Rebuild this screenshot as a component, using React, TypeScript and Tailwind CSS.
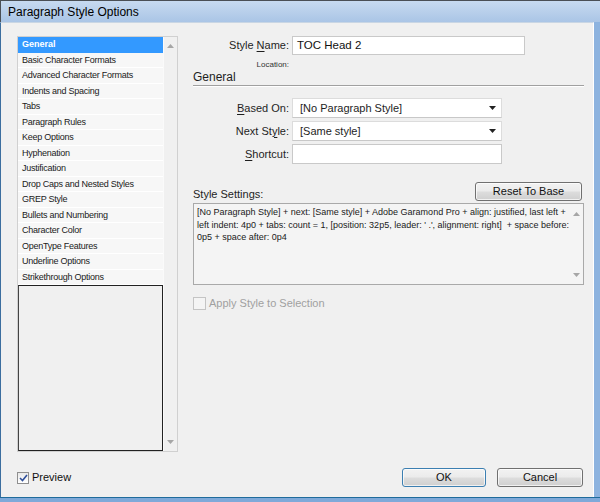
import React from 'react';

const listItems = [
  'General',
  'Basic Character Formats',
  'Advanced Character Formats',
  'Indents and Spacing',
  'Tabs',
  'Paragraph Rules',
  'Keep Options',
  'Hyphenation',
  'Justification',
  'Drop Caps and Nested Styles',
  'GREP Style',
  'Bullets and Numbering',
  'Character Color',
  'OpenType Features',
  'Underline Options',
  'Strikethrough Options',
];

const settingsLines = [
  '[No Paragraph Style] + next: [Same style] + Adobe Garamond Pro + align: justified, last left +',
  "left indent: 4p0 + tabs: count = 1, [position: 32p5, leader: ' .', alignment: right]  + space before:",
  '0p5 + space after: 0p4',
];

const ArrowUp = () => (
  <svg width="7" height="4" viewBox="0 0 7 4">
    <path d="M0 4 L3.5 0 L7 4 Z" fill="#a6a6a6" />
  </svg>
);

const ArrowDown = ({ color = '#a6a6a6' }: { color?: string }) => (
  <svg width="7" height="4" viewBox="0 0 7 4">
    <path d="M0 0 L7 0 L3.5 4 Z" fill={color} />
  </svg>
);

const Label = ({ pre, u, post }: { pre: string; u: string; post: string }) => (
  <div className="w-[96px] text-right text-[11px] text-[#1e1e1e] whitespace-nowrap">
    {pre}
    <span className="underline underline-offset-2">{u}</span>
    {post}
  </div>
);

const Select = ({ value }: { value: string }) => (
  <div className="w-[210px] h-[20px] bg-white border border-[#dcdcdc] border-b-[#c8c8c8] flex items-center justify-between pl-[7px] pr-[5px]">
    <span className="text-[11px] text-[#1e1e1e]">{value}</span>
    <ArrowDown color="#222" />
  </div>
);

const Button = ({ label, focused, w }: { label: string; focused?: boolean; w: string }) => (
  <div
    className={`${w} h-[19px] rounded-[3px] border flex items-center justify-center text-[11px] text-[#111] bg-[linear-gradient(to_bottom,#f2f2f2_0%,#ebebeb_48%,#dddddd_52%,#cfcfcf_100%)] shadow-[inset_0_0_0_1px_rgba(255,255,255,0.7)] ${
      focused ? 'border-[#3c7fb1]' : 'border-[#707070]'
    }`}
  >
    {label}
  </div>
);

export default function App() {
  return (
    <div className="w-[600px] h-[502px] flex flex-col overflow-hidden bg-[#7fa9d9] font-['Liberation_Sans',Arial,sans-serif]">
      {/* title bar */}
      <div className="h-[22px] shrink-0 flex items-center pl-[7px] border-t border-l border-[#4a4f55] bg-[linear-gradient(to_bottom,#c7daf0,#aac5e6)]">
        <span className="text-[12px] text-black">Paragraph Style Options</span>
      </div>

      <div className="flex-1 flex min-h-0">
        <div className="w-[594px] shrink-0 flex flex-col bg-[#f0f0f0] border-l border-[#3c6e9f] border-r border-r-white border-t border-t-[#c9d6e4]">
          {/* main area */}
          <div className="flex pt-[13px] pl-[16px] h-[431px]">
            {/* left list */}
            <div className="w-[161px] h-[416px] border border-[#d0d0d0] flex bg-[#f0f0f0]">
              <div className="w-[145px] flex flex-col">
                {listItems.map((item, i) => (
                  <div
                    key={item}
                    className={`h-[15.5px] leading-[15px] pl-[4px] text-[9px] whitespace-nowrap border-b ${
                      i === 0
                        ? 'bg-[#3399ff] text-white font-bold border-[#3399ff]'
                        : 'bg-[#f7f7f7] text-[#1a1a1a] border-white tracking-[-0.25px]'
                    }`}
                  >
                    {item}
                  </div>
                ))}
                <div className="flex-1 border border-[#222] border-l-[#444] bg-[#f0f0f0]" />
              </div>
              <div className="flex-1 flex flex-col items-center justify-between pt-[7px] pb-[7px] border-l border-[#fafafa]">
                <ArrowUp />
                <ArrowDown />
              </div>
            </div>

            {/* right panel */}
            <div className="ml-[15px] w-[391px] flex flex-col">
              <div className="flex items-center">
                <Label pre="Style " u="N" post="ame:" />
                <div className="ml-[3px] w-[233px] h-[19px] bg-white border border-[#c9c9c9] flex items-center pl-[4px] text-[11.5px] text-[#111]">
                  TOC Head 2
                </div>
              </div>
              <div className="w-[96px] text-right text-[8px] text-[#333] mt-[5px] leading-[10px]">Location:</div>
              <div className="mt-0 text-[12px] text-[#1e1e1e] leading-[14px]">General</div>
              <div className="mt-[1px] h-[2px] border-t border-[#a0a0a0] border-b border-b-white" />

              <div className="mt-[11px] flex items-center">
                <Label pre="" u="B" post="ased On:" />
                <div className="ml-[3px]">
                  <Select value="[No Paragraph Style]" />
                </div>
              </div>
              <div className="mt-[3px] flex items-center">
                <Label pre="Next St" u="y" post="le:" />
                <div className="ml-[3px]">
                  <Select value="[Same style]" />
                </div>
              </div>
              <div className="mt-[3px] flex items-center">
                <Label pre="" u="S" post="hortcut:" />
                <div className="ml-[3px] w-[210px] h-[20px] bg-white border border-[#c9c9c9]" />
              </div>

              <div className="mt-[18px] flex items-center justify-between pr-[2px]">
                <span className="text-[11px] text-[#1e1e1e] leading-[14px] pt-[5px]">Style Settings:</span>
                <Button label="Reset To Base" w="w-[107px]" />
              </div>

              <div className="mt-[2px] w-[391px] h-[82px] border border-[#a9a9a9] bg-[#f4f4f4] flex">
                <div className="flex-1 pl-[3px] pt-[2px] text-[9px] text-[#1a1a1a] leading-[12.5px]">
                  {settingsLines.map((l) => (
                    <div key={l} className="whitespace-pre">{l}</div>
                  ))}
                </div>
                <div className="w-[14px] flex flex-col items-center justify-between pt-[8px] pb-[7px]">
                  <ArrowUp />
                  <ArrowDown />
                </div>
              </div>

              <div className="mt-[10px] flex items-center">
                <div className="w-[13px] h-[13px] border border-[#c4c4c4] bg-[#f4f4f4]" />
                <span className="ml-[3px] text-[11px] text-[#a0a0a0]">Apply Style to Selection</span>
              </div>
            </div>
          </div>

          {/* footer */}
          <div className="flex items-center pl-[16px] pr-[10px] mt-[14px]">
            <div className="w-[12px] h-[12px] border border-[#8f8f8f] bg-[linear-gradient(to_bottom,#e9e9e9,#ffffff)] flex items-center justify-center">
              <svg width="9" height="8" viewBox="0 0 9 8">
                <path d="M1 4 L3.5 6.5 L8 1" stroke="#2f4f9a" strokeWidth="1.6" fill="none" />
              </svg>
            </div>
            <span className="ml-[3px] text-[11px] text-[#111]">Preview</span>
            <div className="ml-auto flex gap-[11px]">
              <Button label="OK" focused w="w-[84px]" />
              <Button label="Cancel" w="w-[86px]" />
            </div>
          </div>
        </div>
        <div className="flex-1 bg-[#8db3df]" />
      </div>
      <div className="h-[5px] shrink-0 border-t border-[#1f6c9c] bg-[#7fa9d9]" />
    </div>
  );
}
